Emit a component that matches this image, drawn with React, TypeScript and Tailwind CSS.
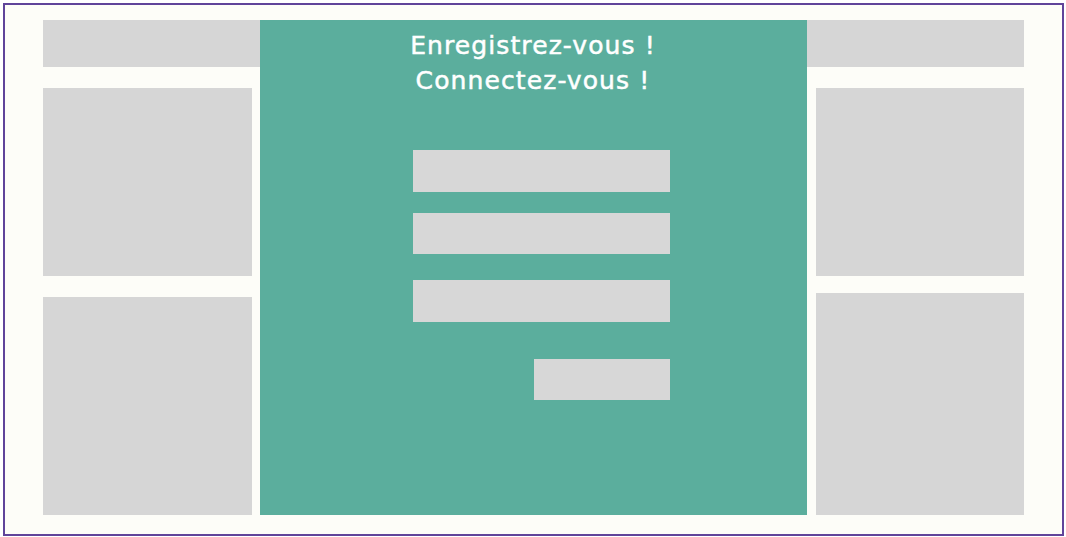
export default function App() {
  return (
    <div className="w-[1066px] h-[537px] bg-white pl-[3px] pt-[3px] pr-[2px] pb-[1px]">
      <div className="h-full border-[2.5px] border-[#60449a] bg-[#fdfdf8] pl-[37.5px] pt-[14.5px] pb-[19.5px] flex">
        {/* left column */}
        <div className="flex flex-col w-[217px]">
          <div className="h-[47px] bg-[#d6d6d6]" />
          <div className="mt-[21px] h-[188px] w-[209px] bg-[#d6d6d6]" />
          <div className="mt-[21px] flex-1 w-[209px] bg-[#d6d6d6]" />
        </div>

        {/* center panel */}
        <div
          className="w-[547px] bg-[#5bae9d] flex flex-col items-center"
          style={{ fontFamily: '"DejaVu Sans", Verdana, sans-serif' }}
        >
          <div className="pt-[8px] text-center text-white text-[25px] leading-[35px] tracking-[1.1px] [-webkit-text-stroke:0.5px_white]">
            <p>Enregistrez-vous !</p>
            <p>Connectez-vous !</p>
          </div>
          <div className="mt-[52px] ml-[16px] w-[257px] flex flex-col">
            <div className="h-[42px] bg-[#d7d7d7]" />
            <div className="mt-[21px] h-[41px] bg-[#d7d7d7]" />
            <div className="mt-[26px] h-[42px] bg-[#d7d7d7]" />
            <div className="mt-[37px] self-end w-[136px] h-[41px] bg-[#d7d7d7]" />
          </div>
        </div>

        {/* right column */}
        <div className="flex flex-col w-[217px]">
          <div className="h-[47px] bg-[#d6d6d6]" />
          <div className="mt-[21px] h-[188px] ml-[9px] bg-[#d6d6d6]" />
          <div className="mt-[17px] flex-1 ml-[9px] bg-[#d6d6d6]" />
        </div>
      </div>
    </div>
  );
}
